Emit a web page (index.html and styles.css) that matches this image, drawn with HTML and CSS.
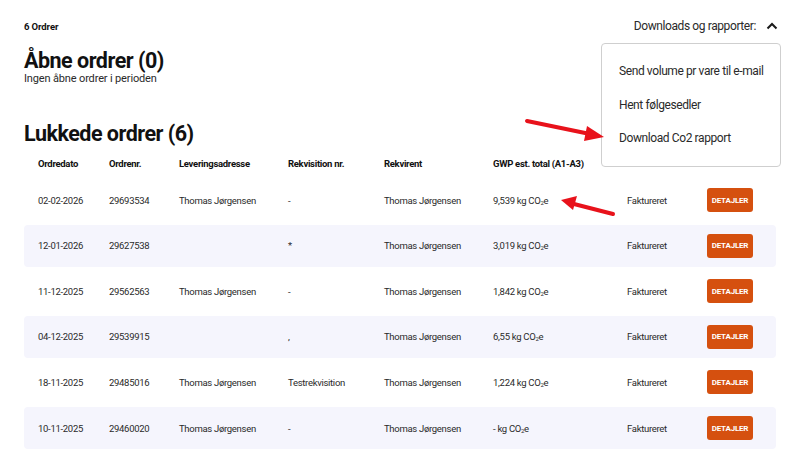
FILE: index.html
```html
<!DOCTYPE html>
<html lang="da">
<head>
<meta charset="utf-8">
<link rel="stylesheet" href="styles.css">
</head>
<body>
<div class="page">
  <div class="topbar">
    <div class="count">6 Ordrer</div>
    <div class="downloads">
      <span>Downloads og rapporter:</span>
      <svg class="chev" width="12" height="8" viewBox="0 0 12 8"><path d="M1.5 6.5 L6 2 L10.5 6.5" fill="none" stroke="#1a1a1a" stroke-width="2"/></svg>
      <div class="menu">
        <div class="menu-item">Send volume pr vare til e-mail</div>
        <div class="menu-item">Hent følgesedler</div>
        <div class="menu-item">Download Co2 rapport</div>
      </div>
    </div>
  </div>

  <h2 class="h-open">Åbne ordrer (0)</h2>
  <div class="none">Ingen åbne ordrer i perioden</div>

  <h2 class="h-closed">Lukkede ordrer (6)</h2>

  <div class="table">
    <div class="row head">
      <div>Ordredato</div><div>Ordrenr.</div><div>Leveringsadresse</div><div>Rekvisition nr.</div><div>Rekvirent</div><div>GWP est. total (A1-A3)</div><div></div><div></div>
    </div>
    <div class="row">
      <div>02-02-2026</div><div>29693534</div><div>Thomas Jørgensen</div><div>-</div><div>Thomas Jørgensen</div><div>9,539 kg CO<sub>2</sub>e</div><div>Faktureret</div><div><span class="btn">DETAJLER</span></div>
    </div>
    <div class="row alt">
      <div>12-01-2026</div><div>29627538</div><div></div><div>*</div><div>Thomas Jørgensen</div><div>3,019 kg CO<sub>2</sub>e</div><div>Faktureret</div><div><span class="btn">DETAJLER</span></div>
    </div>
    <div class="row">
      <div>11-12-2025</div><div>29562563</div><div>Thomas Jørgensen</div><div>-</div><div>Thomas Jørgensen</div><div>1,842 kg CO<sub>2</sub>e</div><div>Faktureret</div><div><span class="btn">DETAJLER</span></div>
    </div>
    <div class="row alt">
      <div>04-12-2025</div><div>29539915</div><div></div><div>,</div><div>Thomas Jørgensen</div><div>6,55 kg CO<sub>2</sub>e</div><div>Faktureret</div><div><span class="btn">DETAJLER</span></div>
    </div>
    <div class="row">
      <div>18-11-2025</div><div>29485016</div><div>Thomas Jørgensen</div><div>Testrekvisition</div><div>Thomas Jørgensen</div><div>1,224 kg CO<sub>2</sub>e</div><div>Faktureret</div><div><span class="btn">DETAJLER</span></div>
    </div>
    <div class="row alt">
      <div>10-11-2025</div><div>29460020</div><div>Thomas Jørgensen</div><div>-</div><div>Thomas Jørgensen</div><div>- kg CO<sub>2</sub>e</div><div>Faktureret</div><div><span class="btn">DETAJLER</span></div>
    </div>
  </div>

  <svg class="arrows" width="800" height="464" viewBox="0 0 800 464">
    <line x1="527" y1="121" x2="590" y2="134" stroke="#e8121b" stroke-width="4" stroke-linecap="round"/>
    <polygon points="604,137 587,126 584,141" fill="#e8121b"/>
    <line x1="613" y1="214" x2="574" y2="204" stroke="#e8121b" stroke-width="4" stroke-linecap="round"/>
    <polygon points="561,200 577,196 573,210" fill="#e8121b"/>
  </svg>
</div>
</body>
</html>
```
FILE: styles.css
```css
* { box-sizing: border-box; }
html, body { margin: 0; padding: 0; background: #fff; }
body {
  font-family: Roboto, "Noto Sans", sans-serif;
  color: #222;
  width: 800px;
  height: 464px;
  overflow: hidden;
}
.page {
  position: relative;
  padding: 0 24px;
}
.topbar {
  display: flex;
  justify-content: space-between;
  align-items: center;
  height: 52px;
}
.count {
  font-size: 9.5px;
  font-weight: 700;
  color: #111;
  letter-spacing: -0.1px;
}
.downloads {
  position: relative;
  display: flex;
  align-items: center;
  gap: 10px;
  font-size: 12px;
  letter-spacing: -0.4px;
  color: #2a2a2a;
  margin-right: -2px;
}
.chev { display: block; margin-top: -1px; }
.menu {
  position: absolute;
  top: 24px;
  right: -3px;
  width: 180px;
  background: #fff;
  border: 1px solid #cfcfcf;
  border-radius: 4px;
  padding: 17px 0 4px 17px;
  z-index: 2;
}
.menu-item {
  height: 33.5px;
  line-height: 20px;
  font-size: 12px;
  letter-spacing: -0.4px;
  color: #2a2a2a;
  white-space: nowrap;
}
h2 {
  margin: 0;
  font-size: 21.5px;
  font-weight: 700;
  color: #111;
  letter-spacing: -0.5px;
  line-height: 20px;
}
.h-open { margin-top: -1px; }
.none {
  margin-top: 2px;
  font-size: 11px;
  line-height: 11px;
  color: #2a2a2a;
  letter-spacing: -0.15px;
}
.h-closed { margin-top: 40px; }
.table {
  margin-top: 8px;
  display: flex;
  flex-direction: column;
  gap: 3.6px;
}
.row {
  display: grid;
  grid-template-columns: 71px 70px 109px 96px 109px 134px 80px 1fr;
  align-items: center;
  height: 42px;
  padding-left: 14px;
  font-size: 9.5px;
  letter-spacing: -0.3px;
  color: #2a2a2a;
  border-radius: 4px;
  white-space: nowrap;
}
.row.head {
  height: 22px;
  font-weight: 700;
  color: #111;
  margin-bottom: 1.5px;
}
.row.alt { background: #f5f5fd; }
sub {
  font-size: 6px;
  vertical-align: -1px;
  line-height: 0;
}
.btn {
  display: inline-flex;
  align-items: center;
  justify-content: center;
  width: 46px;
  height: 24px;
  background: #d5500f;
  border-radius: 3px;
  color: #fff;
  font-size: 8px;
  font-weight: 700;
  letter-spacing: -0.2px;
}
.arrows {
  position: absolute;
  left: 0;
  top: 0;
  pointer-events: none;
  z-index: 3;
}
```
